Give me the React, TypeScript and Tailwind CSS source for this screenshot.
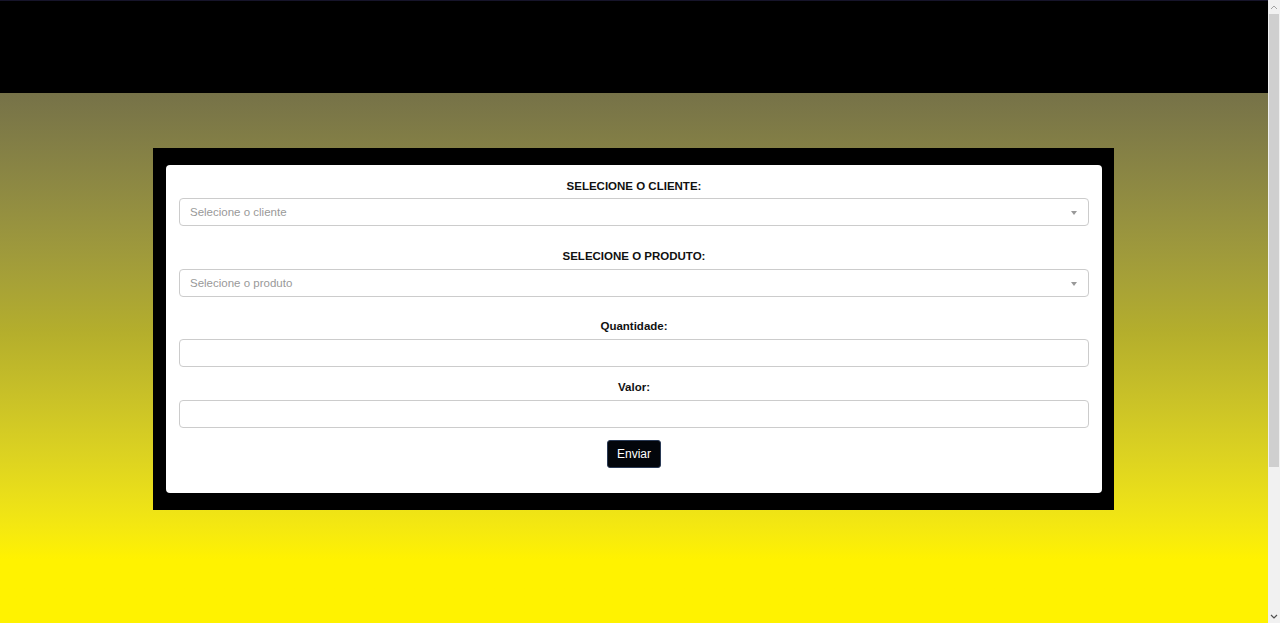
export default function App() {
  return (
    <div className="flex h-[623px] w-full overflow-hidden font-['Liberation_Sans',Arial,sans-serif]">
      <div className="flex min-w-0 flex-1 flex-col">
        <header className="h-[93px] shrink-0 border-t border-[#16142a] bg-black" />
        <main className="flex flex-1 flex-col items-center bg-linear-to-b from-[#767248] via-[#b4ae2c] via-45% to-[#fff200] to-88% pt-[55px] pr-[1px]">
          <div className="w-[961px] bg-black px-[12px] pt-[17px] pb-[17px] pl-[13px]">
            <form className="flex flex-col rounded-[4px] bg-white px-[13px] pt-[14px] pb-[25px]">
              <label className="mb-[5px] block text-center text-[11.5px] font-bold leading-[14px] text-[#111]">
                SELECIONE O CLIENTE:
              </label>
              <Select placeholder="Selecione o cliente" />
              <label className="mt-[23px] mb-[6px] block text-center text-[11.5px] font-bold leading-[14px] text-[#111]">
                SELECIONE O PRODUTO:
              </label>
              <Select placeholder="Selecione o produto" />
              <label className="mt-[22px] mb-[6px] block text-center text-[11.5px] font-bold leading-[14px] text-[#111]">
                Quantidade:
              </label>
              <input className="h-[28px] w-full rounded-[4px] border border-[#ccc] bg-white px-2 text-[12px] outline-none" />
              <label className="mt-[13px] mb-[6px] block text-center text-[11.5px] font-bold leading-[14px] text-[#111]">
                Valor:
              </label>
              <input className="h-[28px] w-full rounded-[4px] border border-[#ccc] bg-white px-2 text-[12px] outline-none" />
              <div className="mt-[12px] flex justify-center">
                <button
                  type="button"
                  className="h-[28px] w-[54px] rounded-[3px] border border-[#2a3a55] bg-[#03060b] text-[12px] text-white"
                >
                  Enviar
                </button>
              </div>
            </form>
          </div>
        </main>
      </div>
      <div className="flex w-[12px] shrink-0 flex-col bg-[#f1f1f1]">
        <div className="flex h-[14px] items-center justify-center text-[#a3a3a3]">
          <svg width="8" height="5" viewBox="0 0 8 5" fill="none">
            <path d="M1 4L4 1L7 4" stroke="currentColor" strokeWidth="1" />
          </svg>
        </div>
        <div className="mx-[1px] h-[453px] bg-[#cfcfcf]" />
        <div className="flex-1" />
        <div className="flex h-[14px] items-center justify-center text-[#505050]">
          <svg width="8" height="5" viewBox="0 0 8 5" fill="none">
            <path d="M1 1L4 4L7 1" stroke="currentColor" strokeWidth="1.2" />
          </svg>
        </div>
      </div>
    </div>
  );
}

function Select({ placeholder }: { placeholder: string }) {
  return (
    <div className="flex h-[28px] w-full items-center justify-between rounded-[4px] border border-[#ccc] bg-white pt-[2px] pr-[11px] pl-[10px]">
      <span className="text-[11.5px] text-[#999]">{placeholder}</span>
      <span className="h-0 w-0 border-x-[3.5px] border-t-[4px] border-x-transparent border-t-[#999]" />
    </div>
  );
}
